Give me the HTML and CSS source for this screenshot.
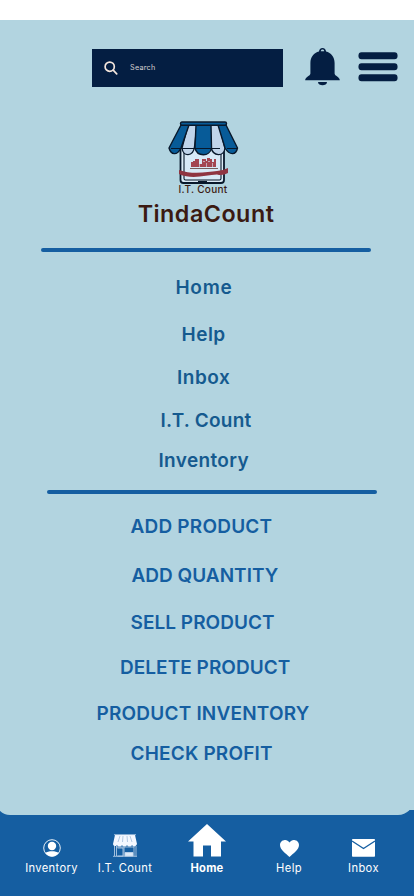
FILE: index.html
```html
<!DOCTYPE html>
<html lang="en">
<head>
<meta charset="utf-8">
<title>TindaCount</title>
<link rel="stylesheet" href="styles.css">
</head>
<body>
<main class="panel">
  <header class="topbar">
    <div class="search">
      <svg width="14" height="14" viewBox="0 0 14 14" fill="none" stroke="#f4e6dc" stroke-width="1.7" stroke-linecap="round"><circle cx="5.7" cy="5.7" r="4.6"/><path d="M9.2 9.2 12.7 12.8"/></svg>
      <span>Search</span>
    </div>
    <svg class="bell" width="35" height="38" viewBox="0 0 35 38" fill="#041e42"><path fill-rule="evenodd" d="M14 3.600C14 1.800 15.500 0 17.500 0S21 1.800 21 3.600C26 4.800 29.600 9 29.600 15V25.500C29.600 28 34.800 29 34.800 32.200H.2C.2 29 5.400 28 5.400 25.500V15C5.400 9 9 4.800 14 3.600ZM15.800 3.200H19.200C19.100 2.200 18.500 1.500 17.500 1.500S15.900 2.200 15.800 3.200Z"/><path d="M13 34H22C22 38.300 13 38.300 13 34Z"/></svg>
    <svg class="burger" width="40" height="30" viewBox="0 0 40 30" fill="#041e42"><rect x=".5" y=".3" width="39" height="7" rx="3"/><rect x=".5" y="11.300" width="39" height="7" rx="3"/><rect x=".5" y="22.300" width="39" height="7" rx="3"/></svg>
  </header>
  <section class="brand">
    <svg width="72" height="64" viewBox="0 0 72 64" stroke="#08182b" stroke-width="1.4" stroke-linejoin="round">
      <rect x="12.500" y="15" width="43.500" height="47" rx="3" fill="#dcebf7" stroke-width="1.800"/>
      <rect x="16" y="17" width="37" height="42" rx="1.500" fill="#d8e9f7" stroke-width="1.100"/>
      <path d="M30 60.800H39" stroke-width="1.800"/>
      <path d="M20 4H29L26.500 26C25 36 15 36 14 27Z" fill="#c0d4ea"/>
      <path d="M51 4H42L43 26C45 36 56 36 57 27Z" fill="#c0d4ea"/>
      <path d="M28 4H43L43.500 27C42 36 29 36 27 27Z" fill="#075b98"/>
      <path d="M13 4H21L13 27C9 35 3 34 1 27ZM58 4H50L57 27C62 35 68 34 69.500 27Z" fill="#075b98"/>
      <path d="M3 27.500H52M59 27.500H69" stroke-width="1.100"/>
      <rect x="12.500" y="1" width="46" height="3.200" rx="1.500" fill="#075b98"/>
      <path d="M23 46V41H25V40H27V38H31V43H34V38H38V40H39V37H42V38H44V41H46V38H48V46Z" fill="#a34652" stroke="none"/>
      <path d="M31.500 43V46M38.500 42V46M44.500 42V46M35 40.500H37M40 40.500H42" stroke="#dcebf7" stroke-width=".6"/>
      <path d="M22 47.500H50" stroke="#5c3a35" stroke-width=".8"/>
      <path d="M11 49C24 54 40 51 49 50Q54 50 60 47V52Q55 55 49 53.500C38 54 24 59 11 53Z" fill="#8f3441" stroke="none"/>
    </svg>
    <span class="tag">I.T. Count</span>
    <h1>TindaCount</h1>
  </section>
  <hr class="rule rule-top">
  <nav class="menu pages">
    <a class="p-home">Home</a>
    <a class="p-help">Help</a>
    <a class="p-inbox">Inbox</a>
    <a class="p-count">I.T. Count</a>
    <a class="p-inventory">Inventory</a>
  </nav>
  <hr class="rule rule-mid">
  <nav class="menu actions">
    <a class="a-add">ADD PRODUCT</a>
    <a class="a-quantity">ADD QUANTITY</a>
    <a class="a-sell">SELL PRODUCT</a>
    <a class="a-delete">DELETE PRODUCT</a>
    <a class="a-inventory">PRODUCT INVENTORY</a>
    <a class="a-profit">CHECK PROFIT</a>
  </nav>
</main>
<footer class="tabs">
  <a class="tab t-inventory">
    <svg width="18" height="18" viewBox="0 0 18 18"><circle cx="9" cy="9" r="8.300" fill="none" stroke="#fff" stroke-width=".9"/><circle cx="9" cy="7" r="4.200" fill="#fff"/><path d="M2.300 14C5 11.500 13 11.500 15.700 14C12.500 18.600 5.500 18.600 2.300 14Z" fill="#fff"/></svg>
    <span>Inventory</span>
  </a>
  <a class="tab t-count">
    <svg width="26" height="23" viewBox="0 0 26 23" fill="none" stroke="#c5d8ec" stroke-width=".8"><path d="M3 1H23L25 10C24 13 21 13 20 11C19 13 16 13 15 11C14 13 11 13 10 11C9 13 6 13 5 11C4 13 1 12 1 10Z" fill="#f4f8ff" stroke="none"/><path d="M2 .7H24M2.500 12V22M4.500 12V22M22 12V22M24 12V22M4.500 13H22M1 22.300H25M12 13V22"/><path d="M8 2 6 8M11 2 10.500 8M15 2 15.500 8M18 2 20 8" stroke="#86a9cf" stroke-width=".6"/><path d="M5.500 14H11V22H5.500"/><path d="M13 18.500H21V22H13Z" fill="#dce9f7"/></svg>
    <span>I.T. Count</span>
  </a>
  <a class="tab t-home">
    <svg width="38" height="33" viewBox="0 0 38 33" fill="#fff"><path d="M19 0 38 17.500H33V32.500H23V21.500H15V32.500H5.500V17.500H0Z"/></svg>
    <span>Home</span>
  </a>
  <a class="tab t-help">
    <svg width="19" height="17" viewBox="0 0 19 17" fill="#fff"><path d="M9.500 17C6 13.500 0 10 0 5C0 0 6.500-2 9.500 2.500C12.500-2 19 0 19 5C19 10 13 13.500 9.500 17Z"/></svg>
    <span>Help</span>
  </a>
  <a class="tab t-inbox">
    <svg width="23" height="18" viewBox="0 0 23 18"><rect width="23" height="17.700" rx=".8" fill="#fff"/><path d="M0 2 11.500 9.500 23 2" fill="none" stroke="#155ea1" stroke-width="1.300"/></svg>
    <span>Inbox</span>
  </a>
</footer>
</body>
</html>
```
FILE: styles.css
```css
* { box-sizing: border-box; }
body {
  margin: 0;
  width: 414px;
  height: 896px;
  overflow: hidden;
  padding-top: 20px;
  background: linear-gradient(#fff 20px, #b2d4e0 20px, #b2d4e0 810px, #155ea1 810px);
  font-family: Inter, sans-serif;
}
svg { display: block; flex: none; }
.panel {
  height: 795px;
  margin-left: -4px;
  padding-left: 4px;
  background: #b2d4e0;
  border-radius: 0 0 16px 14px;
}
.topbar {
  display: flex;
  align-items: flex-start;
  height: 100px;
  padding: 28px 0 0 92px;
}
.search {
  display: flex;
  align-items: center;
  width: 191px;
  height: 38px;
  margin-top: 1px;
  padding-left: 12px;
  gap: 12px;
  background: #041e42;
  color: #d8d3d2;
  font-size: 7.3px;
  letter-spacing: .2px;
}
.search span { margin-top: -2px; }
.bell { margin-left: 22px; }
.burger { margin: 4px 0 0 18px; }
.brand {
  display: flex;
  flex-direction: column;
  align-items: center;
  width: 406px;
  height: 128px;
  color: #3b1a12;
}
.brand svg { margin: 1px 0 0 2px; }
.tag {
  margin-top: -1px;
  font-size: 10px;
  font-weight: 500;
  line-height: 10px;
  letter-spacing: .3px;
  white-space: nowrap;
}
h1 {
  margin: 5px 0 0 6px;
  font-size: 23.3px;
  font-weight: 600;
  line-height: 30px;
  letter-spacing: .5px;
}
.rule {
  width: 330px;
  height: 4px;
  margin: 0;
  border: 0;
  border-radius: 2px;
  background: #155ea1;
}
.rule-top { margin-left: 41px; }
.rule-mid { margin-left: 47px; margin-top: 17px; }
.menu {
  display: flex;
  flex-direction: column;
  align-items: flex-start;
}
.menu a {
  font-size: 19px;
  font-weight: 600;
  line-height: 24px;
  white-space: nowrap;
}
.pages { padding-top: 24px; color: #155a8f; }
.actions { padding-top: 21px; color: #155ea1; }
.menu .p-home { margin-left: 175.5px; letter-spacing: .7px; }
.menu .p-help { margin: 23px 0 0 181.5px; letter-spacing: .5px; }
.menu .p-inbox { margin: 19px 0 0 177px; letter-spacing: .5px; }
.menu .p-count { margin: 19px 0 0 160.5px; letter-spacing: .25px; }
.menu .p-inventory { margin: 16px 0 0 158.500px; letter-spacing: .35px; }
.menu .a-add { margin-left: 130.5px; letter-spacing: .2px; }
.menu .a-quantity { margin: 25px 0 0 131.5px; }
.menu .a-sell { margin: 23px 0 0 130.5px; letter-spacing: .04px; }
.menu .a-delete { margin: 21px 0 0 120px; letter-spacing: .04px; }
.menu .a-inventory { margin: 22px 0 0 96.5px; letter-spacing: .2px; }
.menu .a-profit { margin: 16px 0 0 130.5px; letter-spacing: .18px; }
.tabs {
  display: flex;
  align-items: flex-end;
  height: 60px;
  padding-left: 18px;
  color: #fff;
}
.tab {
  display: flex;
  flex-direction: column;
  align-items: center;
  font-size: 11.2px;
  letter-spacing: .35px;
  line-height: 14px;
  white-space: nowrap;
}
.tab span { margin-top: 4px; }
.t-inventory { width: 67px; }
.t-count { width: 80px; }
.t-home { width: 84px; font-weight: 700; letter-spacing: .2px; }
.t-help { width: 80px; }
.t-inbox { width: 69px; }
```
